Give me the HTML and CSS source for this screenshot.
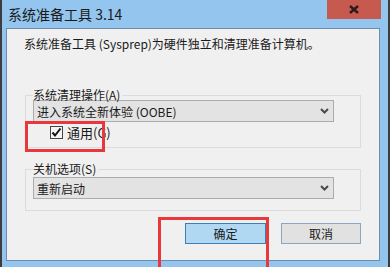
FILE: index.html
```html
<!DOCTYPE html>
<html lang="zh-CN">
<head>
    <meta charset="UTF-8">
    <meta name="viewport" content="width=device-width, initial-scale=1.0">
    <title>系统准备工具 3.14</title>
    <link rel="stylesheet" href="styles.css">
</head>
<body>
    <div class="window">
        <div class="titlebar">
            <span class="title">系统准备工具 3.14</span>
            <button class="close" aria-label="关闭">
                <svg width="10" height="9" viewBox="0 0 10 9">
                    <path d="M1 1 L9 8 M9 1 L1 8" stroke="#2a1c1c" stroke-width="2.4" fill="none"/>
                </svg>
            </button>
        </div>
        <div class="client">
            <p class="intro">系统准备工具 (Sysprep)为硬件独立和清理准备计算机。</p>

            <fieldset class="group">
                <legend>系统清理操作(A)</legend>
                <div class="combo">
                    <span>进入系统全新体验 (OOBE)</span>
                    <svg width="9" height="6" viewBox="0 0 9 6">
                        <polyline points="1,1 4.5,4.5 8,1" stroke="#4a4a4a" stroke-width="2" fill="none"/>
                    </svg>
                </div>
                <label class="check">
                    <span class="box">
                        <svg width="11" height="11" viewBox="0 0 11 11">
                            <path d="M1.5 5.5 L4 8.5 L9.5 1.5" stroke="#111" stroke-width="2" fill="none"/>
                        </svg>
                    </span>
                    通用(G)
                </label>
            </fieldset>

            <fieldset class="group group-power">
                <legend>关机选项(S)</legend>
                <div class="combo">
                    <span>重新启动</span>
                    <svg width="9" height="6" viewBox="0 0 9 6">
                        <polyline points="1,1 4.5,4.5 8,1" stroke="#4a4a4a" stroke-width="2" fill="none"/>
                    </svg>
                </div>
            </fieldset>

            <div class="buttons">
                <button class="btn btn-default">确定</button>
                <button class="btn btn-cancel">取消</button>
            </div>
        </div>
    </div>

    <!-- annotation boxes drawn over the screenshot -->
    <div class="mark mark-check"></div>
    <div class="mark mark-ok"></div>
</body>
</html>
```

FILE: styles.css
```css
html, body {
    overflow: hidden;
}
body {
    font-family: "Noto Sans CJK SC", sans-serif;
    font-size: 12px;
    margin: 0;
    padding: 0;
    height: 267px;
    background-color: #3d3d3d;
    color: #1a1a1a;
}
.window {
    margin-left: 2px;
    width: 386px;
    height: 267px;
    background-color: #93c5ee;
}
.titlebar {
    height: 28px;
    display: flex;
    justify-content: space-between;
    align-items: flex-start;
}
.title {
    padding-left: 6px;
    line-height: 28px;
    font-size: 14px;
    color: #1a1a1a;
}
.close {
    width: 54px;
    height: 19px;
    margin: 0 7px 0 0;
    padding: 0;
    border: none;
    background-color: #c75a4f;
    display: flex;
    align-items: center;
    justify-content: center;
}
.client {
    box-sizing: border-box;
    height: 233px;
    margin: 0 8px 0 4px;
    border: 1px solid #6f8cab;
    background-color: #f0f0f0;
}
.intro {
    margin: 7px 0 0 17px;
    line-height: 16px;
}
.group {
    margin: 35px 0 0 18px;
    padding: 0 26px 8px 7px;
    width: 336px;
    box-sizing: border-box;
    border: 1px solid #dcdcdc;
    min-width: 0;
}
.group legend {
    padding: 0 2px 0 0;
    line-height: 16px;
}
.group-power {
    margin-top: 13px;
    padding-bottom: 11px;
}
.combo {
    box-sizing: border-box;
    height: 22px;
    margin-top: -3px;
    padding: 0 4px 0 3px;
    border: 1px solid #acacac;
    background-color: #e3e3e3;
    display: flex;
    align-items: center;
    justify-content: space-between;
}
.group-power .combo {
    margin-top: 0;
}
.check {
    display: flex;
    align-items: center;
    gap: 4px;
    margin: 4px 0 0 17px;
    height: 13px;
    line-height: 13px;
    font-size: 13px;
}
.box {
    box-sizing: border-box;
    width: 13px;
    height: 13px;
    border: 1px solid #444;
    background-color: #f4f4f4;
    display: flex;
    align-items: center;
    justify-content: center;
}
.buttons {
    display: flex;
    justify-content: flex-end;
    gap: 15px;
    margin-top: 12px;
    padding-right: 18px;
}
.btn {
    height: 21px;
    padding: 0;
    font-family: inherit;
    font-size: 12px;
    color: #1a1a1a;
    border: 1px solid #8aa6c1;
    background-color: #e1e1e1;
}
.btn-default {
    width: 81px;
    border-color: #3c7fb1;
    background-color: #b0d8f3;
}
.btn-cancel {
    width: 80px;
}
.mark {
    position: absolute;
    box-sizing: border-box;
    border: 3px solid #e8383c;
}
.mark-check {
    left: 25px;
    top: 121px;
    width: 80px;
    height: 31px;
}
.mark-ok {
    left: 158px;
    top: 217px;
    width: 111px;
    height: 60px;
}
```
